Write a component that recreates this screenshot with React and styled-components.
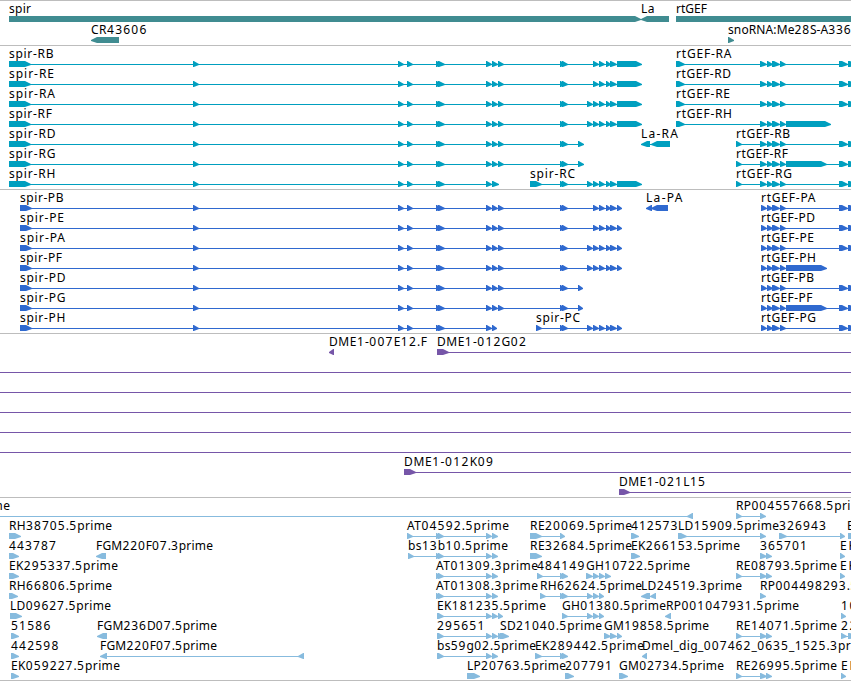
import React from "react";
import styled, { createGlobalStyle } from "styled-components";

const GlobalStyle = createGlobalStyle`
  body {
    margin: 0;
    background: #fff;
    overflow: hidden;
  }
`;

const Browser = styled.main`
  display: flex;
  flex-direction: column;
  width: 851px;
  height: 681px;
  overflow: hidden;
  border-bottom: 1px solid #bdbdbd;
  box-sizing: border-box;
`;

const Track = styled.section`
  display: flex;
  flex-direction: column;
  flex-shrink: 0;
  gap: ${(props) => props.$gap || 0}px;
  padding-bottom: ${(props) => props.$pad}px;
  border-top: 1px solid #bdbdbd;
  color: ${(props) => props.$color};
`;

const Lane = styled.svg`
  display: block;
  width: 851px;
  height: 20px;
  overflow: visible;
  fill: currentColor;
`;

const Label = styled.text`
  fill: #000;
  font-family: "Noto Sans", "DejaVu Sans", sans-serif;
  font-size: 12px;
  white-space: pre;
`;

const Digits = styled.tspan`
  letter-spacing: 0.7px;
`;

// f(label, x, label width, exons, options)
const f = (label, x, w, exons, opts = {}) => ({ label, x, w, exons, ...opts });
const rev = { reverse: true };

const head = [[193, 199], [398, 404], [407, 413], [436, 442], [438, 445]];
const mid = [[486, 492], [492, 498], [498, 504]];
const pair = [[560, 565], [562, 568]];
const tail = [[593, 599], [599, 605], [606, 611], [610, 617]];
const longTail = [[587, 593], ...tail];
const rt = [[760, 767], [767, 773], [772, 780], [780, 786]];
const rtEnd = [[839, 848], [848, 856]];
const atExons = [[436, 441], [438, 444], [486, 492], [492, 498]];
const rePair = [[736, 742], [760, 767], [766, 772]];

const utr = [617, 642];
const spirR = [[9, 31], ...head];
const spirP = [[20, 32], ...head];

const genes = [
  [
    f("spir", 9, 22, [[9, 641]]),
    f("La", 641, 13.5, [[641, 669]], rev),
    f("rtGEF", 676, 31, [[676, 870]]),
  ],
  [
    f("CR43606", 91, 56, [[91, 119]], rev),
    f("snoRNA:Me28S-A3365", 728, 131, [[728, 734]]),
  ],
];

const transcripts = [
  [
    f("spir-RB", 9, 44.5, [...spirR, ...mid, ...pair, ...tail, utr]),
    f("rtGEF-RA", 676, 55.5, [[676, 685], ...rt, ...rtEnd]),
  ],
  [
    f("spir-RE", 9, 45, [...spirR, ...mid, ...pair, ...tail, utr]),
    f("rtGEF-RD", 676, 55, [[676, 685], ...rt, ...rtEnd]),
  ],
  [
    f("spir-RA", 9, 46, [...spirR, ...mid, ...pair, ...longTail, utr]),
    f("rtGEF-RE", 676, 54, [[676, 685], ...rt, ...rtEnd]),
  ],
  [
    f("spir-RF", 9, 43, [...spirR, ...mid, ...pair, ...longTail, utr]),
    f("rtGEF-RH", 676, 56, [[676, 685], ...rt, [786, 831]]),
  ],
  [
    f("spir-RD", 9, 46.5, [...spirR, ...mid, ...pair, [578, 584]]),
    f("La-RA", 641, 37, [[641, 650], [651, 670]], rev),
    f("rtGEF-RB", 736, 54, [[736, 742], ...rt, ...rtEnd]),
  ],
  [
    f("spir-RG", 9, 46.5, [...spirR, ...mid, ...pair, [578, 584]]),
    f("rtGEF-RF", 736, 52, [[736, 742], ...rt, [786, 827], ...rtEnd]),
  ],
  [
    f("spir-RH", 9, 46.5, [...spirR, [486, 492], [492, 499]]),
    f("spir-RC", 530, 45, [[530, 542], ...pair, ...longTail, utr]),
    f("rtGEF-RG", 736, 56, [[736, 742], ...rt, ...rtEnd]),
  ],
];

const rtP = [[761, 767], ...rt.slice(1)];
const proteins = [
  [
    f("spir-PB", 20, 43.5, [...spirP, ...mid, ...pair, ...tail, [617, 622]]),
    f("La-PA", 646, 36.5, [[646, 652], [651, 668]], rev),
    f("rtGEF-PA", 761, 54.5, [...rtP, ...rtEnd]),
  ],
  [
    f("spir-PE", 20, 44, [...spirP, ...mid, ...pair, ...tail, [617, 622]]),
    f("rtGEF-PD", 761, 54, [...rtP, ...rtEnd]),
  ],
  [
    f("spir-PA", 20, 45, [...spirP, ...mid, ...pair, ...longTail, [617, 622]]),
    f("rtGEF-PE", 761, 53, [...rtP, ...rtEnd]),
  ],
  [
    f("spir-PF", 20, 42, [...spirP, ...mid, ...pair, ...longTail, [617, 622]]),
    f("rtGEF-PH", 761, 55, [...rtP, [786, 827]]),
  ],
  [
    f("spir-PD", 20, 45.5, [...spirP, ...mid, ...pair, [578, 583]]),
    f("rtGEF-PB", 761, 53, [...rtP, ...rtEnd]),
  ],
  [
    f("spir-PG", 20, 45.5, [...spirP, ...mid, ...pair, [578, 583]]),
    f("rtGEF-PF", 761, 51.5, [...rtP, [786, 827], ...rtEnd]),
  ],
  [
    f("spir-PH", 20, 45.5, [...spirP, [486, 492], [492, 497]]),
    f("spir-PC", 536, 44, [[536, 542], ...pair, ...longTail, [617, 622]]),
    f("rtGEF-PG", 761, 55, [...rtP, ...rtEnd]),
  ],
];

const through = f("", 0, 0, [], { from: 0, to: 851 });
const clones = [
  [
    f("DME1-007E12.F", 329, 98, [[329, 334]], rev),
    f("DME1-012G02", 437, 89.5, [[437, 449]], { to: 851 }),
  ],
  [through],
  [through],
  [through],
  [through],
  [through],
  [f("DME1-012K09", 404, 89.5, [[404, 416]], { to: 851 })],
  [f("DME1-021L15", 619, 86.5, [[619, 630]], { to: 851 })],
];

const ests = [
  [
    f("prime", -25, 35, [[687, 693]], { reverse: true, from: 0 }),
    f("RP004557668.5prime", 736, 133, [[736, 742], [760, 766]]),
  ],
  [
    f("RH38705.5prime", 9, 103, [[9, 21]]),
    f("AT04592.5prime", 407, 102, [[407, 413], ...atExons]),
    f("RE20069.5prime", 530, 102, [[530, 542], [560, 565]]),
    f("412573", 631, 47, [[631, 639]]),
    f("LD15909.5prime", 678, 101, [[678, 687], [760, 766]]),
    f("326943", 779, 47.5, [[779, 787], [840, 845]]),
    f("EK", 847, 16, [[848, 858]]),
  ],
  [
    f("443787", 9, 47.5, [[9, 19]]),
    f("FGM220F07.3prime", 96, 117, [[96, 106]], rev),
    f("bs13b10.5prime", 408, 100, [[408, 414], ...atExons]),
    f("RE32684.5prime", 530, 102, [[530, 542]]),
    f("EK266153.5prime", 631, 109, [[631, 640]]),
    f("365701", 760, 47.5, [[760, 767], [766, 772]]),
    f("EK", 840, 16, [[840, 845]]),
  ],
  [
    f("EK295337.5prime", 9, 109, [[9, 19]]),
    f("AT01309.3prime", 436, 102, atExons),
    f("484149", 537, 48, [[537, 543], ...pair]),
    f("GH10722.5prime", 586, 104, [[586, 593], [593, 599], [599, 605], [605, 611]]),
    f("RE08793.5prime", 736, 101, rePair),
    f("EK", 840, 16, [[840, 845]]),
  ],
  [
    f("RH66806.5prime", 9, 103, [[9, 18]]),
    f("AT01308.3prime", 436, 102, atExons),
    f("RH62624.5prime", 540, 102, [[540, 546], ...pair, [587, 593], [593, 599], [599, 604]]),
    f("LD24519.3prime", 641, 101, [[641, 650], [650, 656]], rev),
    f("RP004498293.5prime", 760, 133, [[760, 766]]),
  ],
  [
    f("LD09627.5prime", 10, 101, [[10, 22]]),
    f("EK181235.5prime", 437, 109, [[437, 442], ...atExons.slice(1), [498, 503]]),
    f("GH01380.5prime", 562, 104, [[562, 568], [587, 593], [593, 599], [599, 604]]),
    f("RP001047931.5prime", 666, 133, [[665, 671]], rev),
    f("10", 841, 16, [[841, 846]]),
  ],
  [
    f("51586", 11, 40, [[11, 19]]),
    f("FGM236D07.5prime", 97, 120, [[97, 107]], rev),
    f("295651", 437, 48, [[437, 442], ...atExons.slice(1), [498, 504]]),
    f("SD21040.5prime", 500, 102, [[500, 509]]),
    f("GM19858.5prime", 604, 105, [[604, 611], [610, 617], [617, 622]]),
    f("RE14071.5prime", 736, 101, rePair),
    f("22", 841, 16, [[841, 847], [848, 856]]),
  ],
  [
    f("442598", 11, 48, [[11, 19]]),
    f("FGM220F07.5prime", 100, 117, [[100, 107], [298, 304]], rev),
    f("bs59g02.5prime", 437, 99, [[437, 442], ...atExons.slice(1)]),
    f("EK289442.5prime", 535, 109, [[535, 542], ...pair]),
    f("Dmel_dig_007462_0635_1525.3prime", 642, 231, [[642, 647]], rev),
  ],
  [
    f("EK059227.5prime", 11, 109, [[11, 19]]),
    f("LP20763.5prime", 467, 99, [[467, 480]]),
    f("207791", 565, 47.5, [[565, 574]]),
    f("GM02734.5prime", 619, 105, [[619, 628]]),
    f("RE26995.5prime", 736, 101, rePair),
    f("EK", 841, 16, [[841, 846]]),
  ],
];

// Blocks are six pixels high and taper to a point on the intron line
const Exon = ({ start, end, reverse }) => {
  const tip = Math.min(6, end - start - 0.8);
  const base = reverse ? end : start;
  const point = reverse ? start : end;
  const neck = reverse ? start + tip : end - tip;
  return (
    <polygon
      points={`${base},15 ${neck},15 ${point},18 ${point},19 ${neck},21 ${base},21`}
    />
  );
};

const Feature = ({ label, x, w, exons, reverse, from, to }) => {
  const start = from ?? exons[0][0];
  const end = to ?? exons[exons.length - 1][1];
  return (
    <g>
      {(exons.length !== 1 || from !== undefined || to !== undefined) && (
        <rect x={start} y="18" width={end - start} height="1" />
      )}
      {exons.map(([a, b]) => (
        <Exon key={a} start={a} end={b} reverse={reverse} />
      ))}
      {label && (
        <Label x={x} y="12" textLength={w}>
          {label
            .split(/(\d+)/)
            .filter(Boolean)
            .map((part, i) =>
              /\d/.test(part) ? <Digits key={i}>{part}</Digits> : part
            )}
        </Label>
      )}
    </g>
  );
};

const Rows = ({ rows }) =>
  rows.map((row, i) => (
    <Lane key={i}>
      {row.map((feature, j) => (
        <Feature key={j} {...feature} />
      ))}
    </Lane>
  ));

export default () => {
  return (
    <Browser>
      <GlobalStyle />
      <Track $color="#408c91" $gap={1} $pad={3}>
        <Rows rows={genes} />
      </Track>
      <Track $color="#009fbf" $pad={3}>
        <Rows rows={transcripts} />
      </Track>
      <Track $color="#2f69cf" $pad={3}>
        <Rows rows={proteins} />
      </Track>
      <Track $color="#7656a8" $pad={3}>
        <Rows rows={clones} />
      </Track>
      <Track $color="#87bbde" $pad={2}>
        <Rows rows={ests} />
      </Track>
    </Browser>
  );
};
